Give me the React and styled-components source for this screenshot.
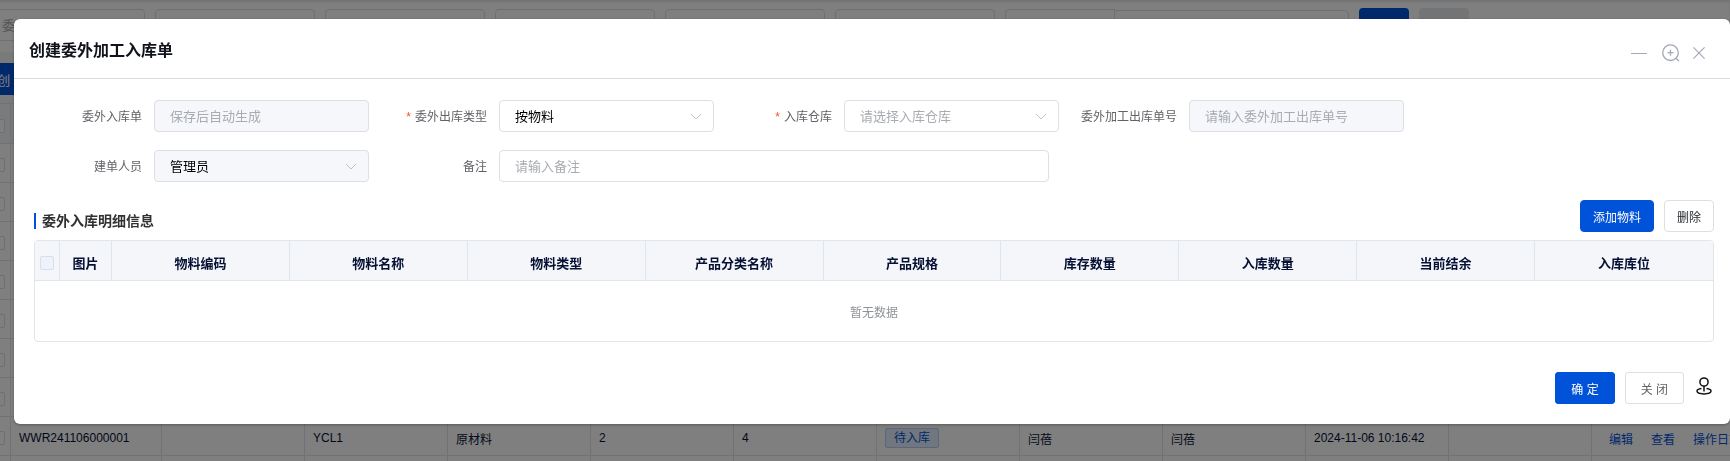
import styled, { createGlobalStyle, css } from "styled-components";

const colors = {
  primary: "#0052d9",
  text: "#606266",
  dark: "#051033",
  placeholder: "#a8abb2",
  border: "#dcdfe6",
  line: "#dfe6ec",
  fill: "#f5f7fa",
  white: "#ffffff",
};

const GlobalStyle = createGlobalStyle`
  * {
    box-sizing: border-box;
  }
  body {
    margin: 0;
    overflow: hidden;
    background: #f0f2f5;
  }
  body, button, input, select {
    font-family: "Liberation Sans", "Noto Sans CJK SC", sans-serif;
    font-size: 12px;
  }
`

/* ---------- page behind the dialog ---------- */

const Page = styled.div`
  height: 100vh;
  overflow: hidden;
`

const SearchBar = styled.form`
  display: flex;
  gap: 10px;
  height: 52px;
  padding-top: 8px;
  margin-left: -15px;
  background: ${ colors.white };
  box-shadow: inset 0 2px 3px rgba(0, 0, 0, .1);
`

const SearchInput = styled.input`
  width: ${({ $short }) => $short ? '110px' : '160px'};
  height: 32px;
  margin-top: 1px;
  padding: 0 16px;
  border: 1px solid ${ colors.border };
  border-radius: ${({ $short }) => $short ? '4px 0 0 4px' : '4px'};
  font-size: 13px;

  &::placeholder {
    color: ${ colors.placeholder };
  }
`

const SearchGroup = styled.div`
  display: flex;

  ${ SearchInput } + ${ SearchInput } {
    width: 235px;
    height: 30px;
    margin-top: 2px;
    margin-left: -1px;
    border-radius: 0 4px 4px 0;
  }
`

const PageButton = styled.button`
  width: ${({ $wide }) => $wide ? '70px' : '50px'};
  height: 32px;
  border: 0;
  border-radius: 4px;
  color: ${ colors.white };
  font-size: 13px;
  background: ${({ $plain }) => $plain ? '#e7e9ed' : colors.primary};
`

const ListPanel = styled.section`
  padding-top: 11px;
  background: #f4f5f7;
`

const ListActions = styled.div`
  display: flex;
  margin-left: -23px;
  padding-bottom: 8px;
`

const ListTable = styled.table`
  width: 1830px;
  margin-left: -30px;
  table-layout: fixed;
  border-collapse: separate;
  border-spacing: 0;
  color: ${ colors.dark };
  background: ${ colors.white };

  th, td {
    height: 39px;
    padding: 4px 8px 0;
    border-right: 1px solid ${ colors.line };
    border-bottom: 1px solid ${ colors.line };
    text-align: left;
    white-space: nowrap;
  }
  th {
    height: 41px;
    border-top: 1px solid ${ colors.line };
    background: ${ colors.fill };
  }
  th:first-child, td:first-child {
    padding: 4px 5px 0 0;
    text-align: right;
  }
`

const Checkbox = styled.input.attrs({ type: "checkbox" })`
  appearance: none;
  display: inline-block;
  width: 14px;
  height: 14px;
  margin: 0;
  vertical-align: middle;
  border: 1px solid ${ colors.border };
  border-radius: 2px;
  background: ${({ disabled }) => disabled ? '#edf2fc' : colors.white};
`

const Tag = styled.span`
  display: inline-block;
  height: 20px;
  padding: 0 8px;
  line-height: 18px;
  color: ${ colors.primary };
  border: 1px solid #b3cdfb;
  border-radius: 2px;
  background: #e3edff;
`

const RowLinks = styled.nav`
  display: flex;
  gap: 18px;
  padding-left: 9px;

  a {
    color: ${ colors.primary };
    text-decoration: none;
  }
`

/* ---------- dialog ---------- */

const Overlay = styled.div`
  position: fixed;
  inset: 0;
  padding: 19px 0 0 14px;
  background: rgba(0, 0, 0, .5);
`

const Dialog = styled.section`
  border-radius: 6px;
  background: ${ colors.white };
  box-shadow: 0 1px 3px rgba(0, 0, 0, .3);
`

const DialogHeader = styled.header`
  display: flex;
  align-items: center;
  justify-content: space-between;
  height: 60px;
  padding: 4px 25px 0 15px;
  border-bottom: 1px solid #d9dbdf;
`

const DialogTitle = styled.h1`
  margin: 0;
  font-size: 16px;
  line-height: 24px;
  color: #10131c;
`

const WindowTools = styled.div`
  display: flex;
  align-items: center;
  gap: 13px;
  padding-top: 5px;
`

const IconButton = styled.button`
  display: flex;
  padding: 0;
  border: 0;
  background: none;
  color: #a3a9b6;
`

const PinButton = styled(IconButton)`
  padding: 0 0 5px 2px;
  color: #111111;
`

const DialogBody = styled.div`
  padding: 21px 16px 20px 20px;
`

const Form = styled.form`
  display: flex;
  flex-wrap: wrap;
  gap: 18px 10px;
  padding-right: 240px;
`

const Field = styled.div`
  display: flex;
  align-items: center;
  width: ${({ $wide }) => $wide ? '670px' : '335px'};
`

const Label = styled.label`
  width: 120px;
  flex-shrink: 0;
  padding: 2px 12px 0 0;
  line-height: 30px;
  text-align: right;
  white-space: nowrap;
  color: ${ colors.text };

  ${({ $required }) => $required && css`
    &::before {
      content: "*";
      margin-right: 4px;
      color: #f5522d;
    }
  `}
`

const control = css`
  width: 100%;
  height: 32px;
  padding: 0 15px;
  border: 1px solid ${ colors.border };
  border-radius: 4px;
  outline: none;
  font-size: 13px;
  color: #000000;
  opacity: 1;
  background: ${({ disabled }) => disabled ? colors.fill : colors.white};
`

const TextInput = styled.input`
  ${ control }

  &::placeholder {
    color: ${ colors.placeholder };
  }
`

const SelectWrapper = styled.div`
  position: relative;
  flex: 1;
  min-width: 0;

  svg {
    position: absolute;
    top: 13px;
    right: 12px;
    pointer-events: none;
  }
`

const SelectInput = styled.select`
  ${ control }
  appearance: none;
  ${({ $empty }) => $empty && css`color: ${ colors.placeholder };`}
`

const SectionBar = styled.div`
  display: flex;
  align-items: flex-start;
  justify-content: space-between;
  height: 40px;
  margin-top: 18px;
`

const SectionTitle = styled.h2`
  margin: 13px 0 0;
  padding-left: 6px;
  border-left: 2px solid ${ colors.primary };
  font-size: 14px;
  line-height: 16px;
  color: #303133;
`

const Actions = styled.div`
  display: flex;
  gap: 10px;
`

const DialogFooter = styled.footer`
  display: flex;
  align-items: center;
  justify-content: flex-end;
  gap: 10px;
  padding: 10px 18px 20px;
`

const Button = styled.button`
  height: 32px;
  padding: 0 15px;
  border: 1px solid ${({ $primary }) => $primary ? colors.primary : colors.border};
  border-radius: 3px;
  color: ${({ $primary }) => $primary ? colors.white : colors.text};
  background: ${({ $primary }) => $primary ? colors.primary : colors.white};

  ${ Actions } & {
    padding: 0 12px;
    border-radius: 4px;
    color: ${({ $primary }) => $primary ? colors.white : '#1f2329'};
  }
`

const DetailFrame = styled.div`
  border: 1px solid ${ colors.line };
  border-radius: 4px;
  overflow: hidden;
`

const DetailTable = styled.table`
  width: 100%;
  table-layout: fixed;
  border-collapse: separate;
  border-spacing: 0;

  th {
    height: 40px;
    padding: 3px 0 0;
    border-right: 1px solid ${ colors.line };
    border-bottom: 1px solid ${ colors.line };
    background: #f4f6fa;
    font-size: 13px;
    color: ${ colors.dark };
  }
  th:last-child {
    border-right: 0;
  }
  td {
    height: 60px;
    padding: 0;
    text-align: center;
    color: #909399;
  }
`

const Chevron = () => (
  <svg width="12" height="8" viewBox="0 0 12 8" fill="none" stroke="#c0c4cc">
    <path d="M1 1l5 5 5-5" />
  </svg>
)

const MinusIcon = () => (
  <svg width="18" height="18" viewBox="0 0 18 18" fill="none" stroke="currentColor">
    <path d="M0 9.5h16" />
  </svg>
)

const ZoomIcon = () => (
  <svg width="18" height="18" viewBox="0 0 18 18" fill="none" stroke="currentColor" strokeWidth="1.3">
    <circle cx="8.5" cy="8.7" r="7.8" />
    <path d="M14 14.200l3 3M8.500 5.700v6M5.500 8.700h6" />
  </svg>
)

const CloseIcon = () => (
  <svg width="12" height="12" viewBox="0 0 12 12" fill="none" stroke="currentColor" strokeWidth="1.2">
    <path d="M.4.4l11.200 11.200M11.600.4L.4 11.600" />
  </svg>
)

const PinIcon = () => (
  <svg width="16" height="18" viewBox="0 0 16 18" fill="none" stroke="currentColor" strokeWidth="1.5">
    <circle cx="8" cy="5" r="4.1" />
    <path d="M8 9v5.500M5.500 11.600C2.700 12 1 12.900 1 14.100c0 1.600 3 2.800 7 2.800s7-1.200 7-2.800c0-1.200-1.700-2.100-4.500-2.500" />
  </svg>
)

const detailColumns = ["物料编码", "物料名称", "物料类型", "产品分类名称", "产品规格", "库存数量", "入库数量", "当前结余", "入库库位"]
const emptyRows = [1, 2, 3, 4, 5, 6, 7]
const emptyCells = [1, 2, 3, 4, 5, 6, 7, 8, 9, 10, 11, 12]

const EmptyRow = () => (
  <tr>
    <td><Checkbox aria-label="选择" /></td>
    {emptyCells.map((cell) => <td key={cell} />)}
  </tr>
)

const ListPage = () => (
  <Page>
    <SearchBar>
      <SearchInput placeholder="委外入库单" aria-label="委外入库单" />
      <SearchInput aria-label="物料编码" />
      <SearchInput aria-label="物料名称" />
      <SearchInput aria-label="物料类型" />
      <SearchInput aria-label="产品规格" />
      <SearchInput aria-label="入库仓库" />
      <SearchGroup>
        <SearchInput $short aria-label="类型" />
        <SearchInput aria-label="日期" />
      </SearchGroup>
      <PageButton type="button" aria-label="查询" />
      <PageButton type="button" $plain aria-label="重置" />
    </SearchBar>
    <ListPanel>
      <ListActions>
        <PageButton type="button" $wide>创 建</PageButton>
      </ListActions>
      <ListTable>
        <colgroup>
          <col width="41" />
          <col width="151" />
          {emptyCells.slice(2).map((cell) => <col key={cell} width="143" />)}
          <col />
        </colgroup>
        <thead>
          <tr>
            <th><Checkbox aria-label="全选" /></th>
            {emptyCells.map((cell) => <th key={cell} />)}
          </tr>
        </thead>
        <tbody>
          {emptyRows.map((row) => <EmptyRow key={row} />)}
          <tr>
            <td><Checkbox aria-label="选择" /></td>
            <td>WWR241106000001</td>
            <td />
            <td>YCL1</td>
            <td>原材料</td>
            <td>2</td>
            <td>4</td>
            <td><Tag>待入库</Tag></td>
            <td>闫蓓</td>
            <td>闫蓓</td>
            <td>2024-11-06 10:16:42</td>
            <td />
            <td>
              <RowLinks>
                <a href="#edit">编辑</a>
                <a href="#view">查看</a>
                <a href="#log">操作日志</a>
              </RowLinks>
            </td>
          </tr>
          <EmptyRow />
        </tbody>
      </ListTable>
    </ListPanel>
  </Page>
)

const InputField = ({ id, label, wide, ...otherProps }) => (
  <Field $wide={wide}>
    <Label htmlFor={id}>{label}</Label>
    <TextInput id={id} {...otherProps} />
  </Field>
)

const SelectField = ({ id, label, required, value, placeholder, disabled }) => (
  <Field>
    <Label htmlFor={id} $required={required}>{label}</Label>
    <SelectWrapper>
      <SelectInput id={id} disabled={disabled} $empty={!value}>
        <option>{value || placeholder}</option>
      </SelectInput>
      <Chevron />
    </SelectWrapper>
  </Field>
)

export default function App() {
  return (
    <>
      <GlobalStyle />
      <ListPage />
      <Overlay>
        <Dialog role="dialog" aria-labelledby="dialog-title">
          <DialogHeader>
            <DialogTitle id="dialog-title">创建委外加工入库单</DialogTitle>
            <WindowTools>
              <IconButton type="button" aria-label="最小化"><MinusIcon /></IconButton>
              <IconButton type="button" aria-label="放大"><ZoomIcon /></IconButton>
              <IconButton type="button" aria-label="关闭"><CloseIcon /></IconButton>
            </WindowTools>
          </DialogHeader>
          <DialogBody>
            <Form>
              <InputField id="order" label="委外入库单" placeholder="保存后自动生成" disabled />
              <SelectField id="type" label="委外出库类型" value="按物料" required />
              <SelectField id="store" label="入库仓库" placeholder="请选择入库仓库" required />
              <InputField id="out-order" label="委外加工出库单号" placeholder="请输入委外加工出库单号" disabled />
              <SelectField id="creator" label="建单人员" value="管理员" disabled />
              <InputField id="remark" label="备注" placeholder="请输入备注" wide />
            </Form>
            <SectionBar>
              <SectionTitle>委外入库明细信息</SectionTitle>
              <Actions>
                <Button type="button" $primary>添加物料</Button>
                <Button type="button">删除</Button>
              </Actions>
            </SectionBar>
            <DetailFrame>
              <DetailTable>
                <colgroup>
                  <col width="25" />
                  <col width="52" />
                  {detailColumns.map((name) => <col key={name} />)}
                </colgroup>
                <thead>
                  <tr>
                    <th><Checkbox disabled aria-label="全选" /></th>
                    <th>图片</th>
                    {detailColumns.map((name) => <th key={name}>{name}</th>)}
                  </tr>
                </thead>
                <tbody>
                  <tr>
                    <td colSpan={11}>暂无数据</td>
                  </tr>
                </tbody>
              </DetailTable>
            </DetailFrame>
          </DialogBody>
          <DialogFooter>
            <Button type="button" $primary>确 定</Button>
            <Button type="button">关 闭</Button>
            <PinButton type="button" aria-label="定位"><PinIcon /></PinButton>
          </DialogFooter>
        </Dialog>
      </Overlay>
    </>
  )
}
